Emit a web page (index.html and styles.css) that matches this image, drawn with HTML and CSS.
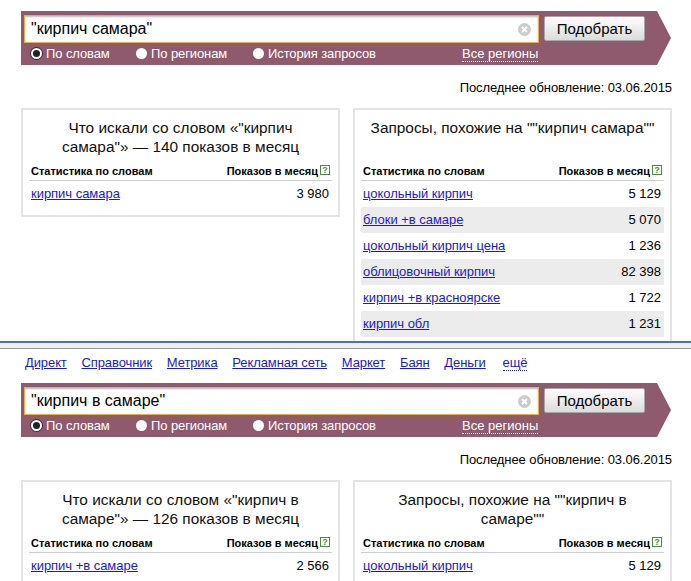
FILE: index.html
```html
<!DOCTYPE html>
<html lang="ru">
<head>
<meta charset="utf-8">
<title>Подбор слов</title>
<link rel="stylesheet" href="styles.css">
</head>
<body>
<section class="shot shot-first">
  <form class="banner">
    <div class="search-row">
      <div class="search-box"><span class="query">"кирпич самара"</span>
        <svg class="clear" viewBox="0 0 13 13"><circle cx="6.5" cy="6.5" r="6.5" fill="#ccc"/><path d="M4 4l5 5M9 4l-5 5" stroke="#fff" stroke-width="2"/></svg>
      </div>
      <div class="submit">Подобрать</div>
    </div>
    <div class="mode-row">
      <span class="mode mode-words"><i class="radio on"></i>По словам</span>
      <span class="mode mode-regions"><i class="radio"></i>По регионам</span>
      <span class="mode mode-history"><i class="radio"></i>История запросов</span>
      <span class="all-regions">Все регионы</span>
    </div>
  </form>
  <p class="updated">Последнее обновление: 03.06.2015</p>
  <div class="cards">
    <article class="card">
      <h2 class="card-title">Что искали со словом «"кирпич самара"» — 140 показов в месяц</h2>
      <div class="thead"><span>Статистика по словам</span><span class="thead-count">Показов в месяц<svg class="help" viewBox="0 0 10 10"><rect x=".5" y=".5" width="9" height="9" fill="#fff" stroke="#4b8a4b"/><text x="5" y="8" text-anchor="middle" class="help-text">?</text></svg></span></div>
      <div class="row"><a href="#">кирпич самара</a><span>3 980</span></div>
    </article>
    <article class="card">
      <h2 class="card-title">Запросы, похожие на ""кирпич самара""</h2>
      <div class="thead"><span>Статистика по словам</span><span class="thead-count">Показов в месяц<svg class="help" viewBox="0 0 10 10"><rect x=".5" y=".5" width="9" height="9" fill="#fff" stroke="#4b8a4b"/><text x="5" y="8" text-anchor="middle" class="help-text">?</text></svg></span></div>
      <div class="row"><a href="#">цокольный кирпич</a><span>5 129</span></div>
      <div class="row alt"><a href="#">блоки +в самаре</a><span>5 070</span></div>
      <div class="row"><a href="#">цокольный кирпич цена</a><span>1 236</span></div>
      <div class="row alt"><a href="#">облицовочный кирпич</a><span>82 398</span></div>
      <div class="row"><a href="#">кирпич +в красноярске</a><span>1 722</span></div>
      <div class="row alt"><a href="#">кирпич обл</a><span>1 231</span></div>
    </article>
  </div>
</section>
<div class="divider"></div>
<section class="shot shot-second">
  <nav class="services">
    <a href="#">Директ</a><a href="#">Справочник</a><a href="#">Метрика</a><a href="#">Рекламная сеть</a><a href="#">Маркет</a><a href="#">Баян</a><a href="#">Деньги</a><a href="#" class="more">ещё</a>
  </nav>
  <form class="banner">
    <div class="search-row">
      <div class="search-box"><span class="query">"кирпич в самаре"</span>
        <svg class="clear" viewBox="0 0 13 13"><circle cx="6.5" cy="6.5" r="6.5" fill="#ccc"/><path d="M4 4l5 5M9 4l-5 5" stroke="#fff" stroke-width="2"/></svg>
      </div>
      <div class="submit">Подобрать</div>
    </div>
    <div class="mode-row">
      <span class="mode mode-words"><i class="radio on"></i>По словам</span>
      <span class="mode mode-regions"><i class="radio"></i>По регионам</span>
      <span class="mode mode-history"><i class="radio"></i>История запросов</span>
      <span class="all-regions">Все регионы</span>
    </div>
  </form>
  <p class="updated">Последнее обновление: 03.06.2015</p>
  <div class="cards">
    <article class="card">
      <h2 class="card-title">Что искали со словом «"кирпич в самаре"» — 126 показов в месяц</h2>
      <div class="thead"><span>Статистика по словам</span><span class="thead-count">Показов в месяц<svg class="help" viewBox="0 0 10 10"><rect x=".5" y=".5" width="9" height="9" fill="#fff" stroke="#4b8a4b"/><text x="5" y="8" text-anchor="middle" class="help-text">?</text></svg></span></div>
      <div class="row"><a href="#">кирпич +в самаре</a><span>2 566</span></div>
    </article>
    <article class="card">
      <h2 class="card-title">Запросы, похожие на ""кирпич в самаре""</h2>
      <div class="thead"><span>Статистика по словам</span><span class="thead-count">Показов в месяц<svg class="help" viewBox="0 0 10 10"><rect x=".5" y=".5" width="9" height="9" fill="#fff" stroke="#4b8a4b"/><text x="5" y="8" text-anchor="middle" class="help-text">?</text></svg></span></div>
      <div class="row"><a href="#">цокольный кирпич</a><span>5 129</span></div>
    </article>
  </div>
</section>
</body>
</html>
```
FILE: styles.css
```css
html, body { margin: 0; padding: 0; background: #fff; }
body {
  width: 691px;
  height: 581px;
  overflow: hidden;
  font-family: "Liberation Sans", Arial, sans-serif;
  font-size: 13px;
  color: #000;
}
.shot { overflow: hidden; }
.shot-first { height: 341px; padding-top: 11px; box-sizing: border-box; }
.shot-second { height: 232px; }
.divider {
  height: 8px;
  box-sizing: border-box;
  background: #eeeeee;
  border-top: 2px solid #4a6fc0;
  border-bottom: 1px solid #999;
}
.services {
  display: flex;
  gap: 14.8px;
  height: 34px;
  padding: 6px 0 0 25px;
  box-sizing: border-box;
  line-height: 15px;
  letter-spacing: -0.1px;
}
.services a { color: #1a1acc; }
.services a.more { text-decoration: none; border-bottom: 1px dotted #1a1acc; height: 15px; margin-left: 2px; }
.banner {
  width: 650px;
  height: 54px;
  margin: 0 0 0 21px;
  box-sizing: border-box;
  padding: 4px 0 0 3px;
  background: #8f5a6e;
  clip-path: polygon(0 0, 636px 0, 650px 27px, 636px 100%, 0 100%);
}
.search-row { display: flex; gap: 5px; height: 28px; }
.search-box {
  width: 515px;
  height: 28px;
  box-sizing: border-box;
  display: flex;
  align-items: center;
  justify-content: space-between;
  padding: 0 7px 0 6px;
  background: #fff;
  border: 1px solid #e6b04c;
  box-shadow: inset 0 1px 2px #bbb;
  font-size: 16px;
}
.clear { width: 13px; height: 13px; }
.submit {
  width: 101px;
  height: 25px;
  margin-top: 1px;
  box-sizing: border-box;
  border: 1px solid #a8a8a8;
  border-radius: 2px;
  background: linear-gradient(#fdfdfd, #dcdcdc);
  font-size: 15px;
  line-height: 23px;
  text-align: center;
}
.mode-row {
  display: flex;
  align-items: center;
  height: 21px;
  color: #fff;
  font-size: 13px;
}
.mode { display: flex; align-items: center; letter-spacing: -0.1px; }
.mode-words { margin-left: 7px; width: 105px; }
.mode-regions { width: 117px; }
.mode-history { width: 209px; }
.radio {
  width: 11px;
  height: 11px;
  margin-right: 4px;
  border-radius: 50%;
  background: #fff;
  box-sizing: border-box;
}
.radio.on { border: 2px solid #fff; background: #222; box-shadow: 0 0 0 1px #333; }
.all-regions { border-bottom: 1px dotted #fff; line-height: 15px; }
.updated {
  margin: 14px 19px 0 0;
  height: 17px;
  line-height: 17px;
  text-align: right;
  font-size: 13px;
  letter-spacing: -0.08px;
}
.cards {
  display: flex;
  gap: 13px;
  align-items: flex-start;
  margin: 12px 0 0 21px;
}
.card {
  width: 319px;
  box-sizing: border-box;
  border: 2px solid #e4e4e4;
  padding: 8px 6px 8px;
}
.card-title {
  margin: 0 6px;
  min-height: 38px;
  font-size: 15.4px;
  font-weight: 400;
  line-height: 19px;
  text-align: center;
  color: #111;
}
.thead {
  display: flex;
  justify-content: space-between;
  align-items: flex-end;
  height: 25px;
  padding: 0 2px 3px;
  box-sizing: border-box;
  border-bottom: 1px solid #ccccd6;
  font-size: 11px;
  font-weight: 700;
}
.thead-count { display: flex; align-items: center; gap: 2px; }
.help { width: 10px; height: 10px; margin-bottom: 2px; }
.help-text { font-size: 9px; fill: #4b8a4b; font-weight: 700; }
.row {
  display: flex;
  justify-content: space-between;
  align-items: center;
  height: 26px;
  padding: 0 3px 2px 2px;
  box-sizing: border-box;
  font-size: 13px;
}
.row a { color: #1a1acc; letter-spacing: -0.03px; }
.row.alt { background: #ececec; }
```
